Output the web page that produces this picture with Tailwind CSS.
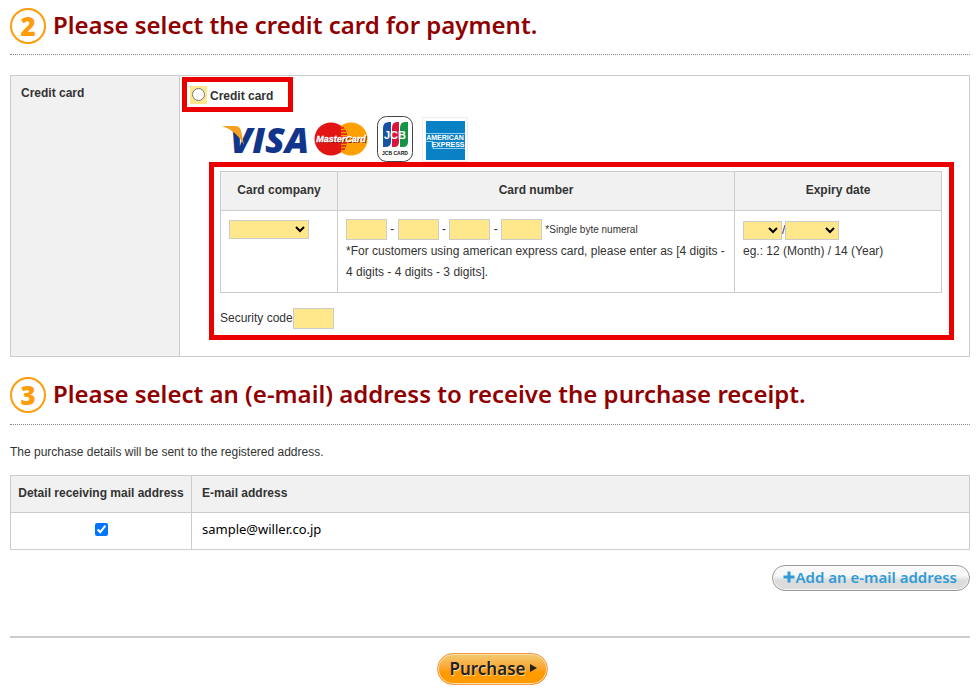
<!DOCTYPE html>
<html lang="en">
<head>
    <meta charset="UTF-8">
    <meta name="viewport" content="width=device-width, initial-scale=1.0">
    <title>Payment</title>
    <script src="https://cdn.jsdelivr.net/npm/@tailwindcss/browser@4"></script>
</head>
<body class="bg-white font-['Liberation_Sans',Arial,sans-serif] text-[12px] leading-[21px] text-[#333]">
    <form class="px-[10px] pt-2">
        <!-- credit card -->
        <h2 class="flex items-center gap-[7px] pb-[10px] border-b border-dotted border-[#888] font-['Noto_Sans',sans-serif] text-[24px] leading-8 font-semibold text-[#900000]">
            <span class="flex items-center justify-center size-9 shrink-0 rounded-full border-2 border-[#ff9c0c] text-[26px] font-black text-[#ff9c0c]">2</span>
            <span class="pb-0.5">Please select the credit card for payment.</span>
        </h2>

        <div class="mt-5 flex border border-[#ccc]">
            <div class="w-[169px] shrink-0 px-[10px] py-[7px] bg-[#f1f1f1] border-r border-[#ccc] font-bold">Credit card</div>
            <div class="grow pl-[2px] pr-[15px] pt-px pb-4">
                <label class="flex w-[111px] h-[35px] items-center gap-[3px] border-5 border-[#eb0000] pl-[3px] font-bold">
                    <span class="flex items-center justify-center w-[17px] h-[18px] bg-[#ffe88c]">
                        <input type="radio" name="payment" class="size-[13px]">
                    </span>
                    <span class="pt-[3px]">Credit card</span>
                </label>

                <div class="ml-[39px] mt-1 flex items-center h-[46px]">
                    <svg class="w-[90px] h-[46px]" viewBox="0 0 90 46" role="img" aria-label="VISA">
                        <text x="9" y="37" font-family="Open Sans, sans-serif" font-size="36" font-weight="800" font-style="italic" fill="#10358a">VISA</text>
                        <path d="M1 10H14Q19 10 20 15L23 29Q16 15 1 10Z" fill="#f5a01e"/>
                    </svg>
                    <svg class="ml-[3px] w-[54px] h-[46px]" viewBox="0 0 54 46" role="img" aria-label="MasterCard">
                        <circle cx="37" cy="23" r="16.500" fill="#ff9f00"/>
                        <circle cx="17" cy="23" r="16.500" fill="#e31414"/>
                        <path d="M27 10a16.500 16.500 0 0 1 0 26z" fill="#ff9f00"/>
                        <path d="M26 12h4M25 15h7M24 18h9M24 21h9M24 24h9M24 27h9M24 30h8M25 33h6" stroke="#e31414" stroke-width="1.500"/>
                        <text x="28" y="27" text-anchor="middle" font-family="Liberation Sans, sans-serif" font-size="9" font-weight="bold" font-style="italic" fill="#7a1408">MasterCard</text>
                        <text x="27" y="26" text-anchor="middle" font-family="Liberation Sans, sans-serif" font-size="9" font-weight="bold" font-style="italic" fill="#fff" stroke="#fff" stroke-width=".3">MasterCard</text>
                    </svg>
                    <svg class="ml-[9px] w-9 h-[46px]" viewBox="0 0 36 46" role="img" aria-label="JCB Cards">
                        <rect x=".5" y=".5" width="35" height="45" rx="9" fill="#fff" stroke="#444"/>
                        <path d="M6 12q0-6 6-6h2v20q0 5-6 5H6z" fill="#1852a5"/>
                        <path d="M15 12q0-6 5-6h2v20q0 5-5 5h-2z" fill="#d9163b"/>
                        <path d="M23 12q0-6 5-6h3v20q0 5-5 5h-3z" fill="#159447"/>
                        <text x="18" y="23" text-anchor="middle" font-family="Liberation Sans, sans-serif" font-size="11" font-weight="bold" fill="#fff">JCB</text>
                        <text x="18" y="39" text-anchor="middle" font-family="Liberation Sans, sans-serif" font-size="5" font-weight="bold" fill="#111">JCB CARD</text>
                    </svg>
                    <svg class="ml-[9px] w-[46px] h-[46px]" viewBox="0 0 46 46" role="img" aria-label="American Express">
                        <rect x=".5" y="1.500" width="45" height="44" fill="#fff" stroke="#eee"/>
                        <rect x="4" y="5" width="39" height="39" fill="#0b81c5"/>
                        <path d="M4 17.500H43M4 25.500H11V32.500H43" fill="none" stroke="#8fd0f2"/>
                        <text x="23" y="24" text-anchor="middle" font-family="Liberation Sans, sans-serif" font-size="7" font-weight="bold" fill="#fff">AMERICAN</text>
                        <text x="26" y="31" text-anchor="middle" font-family="Liberation Sans, sans-serif" font-size="7" font-weight="bold" fill="#fff">EXPRESS</text>
                    </svg>
                </div>

                <div class="ml-[27px] border-5 border-[#eb0000] pl-[6px] pr-[7px] pt-1 pb-[6px]">
                    <table class="w-full table-fixed border-collapse">
                        <thead>
                            <tr class="h-[39px] bg-[#f1f1f1]">
                                <th class="w-[117px] border border-[#ccc] pb-0.5">Card company</th>
                                <th class="border border-[#ccc] pb-0.5">Card number</th>
                                <th class="w-[207px] border border-[#ccc] pb-0.5">Expiry date</th>
                            </tr>
                        </thead>
                        <tbody>
                            <tr class="h-[82px] align-top">
                                <td class="border border-[#ccc] px-2 pt-2">
                                    <select aria-label="Card company" class="block mt-px w-20 h-[19px] border border-[#ccc] bg-[#ffe88c] text-black"><option></option></select>
                                </td>
                                <td class="border border-[#ccc] px-2 pt-2">
                                    <div class="h-[22px]">
                                        <input type="text" aria-label="Card number 1" class="align-middle w-[41px] h-[21px] border border-[#ccc] bg-[#ffe88c] px-1">
                                        -
                                        <input type="text" aria-label="Card number 2" class="align-middle w-[41px] h-[21px] border border-[#ccc] bg-[#ffe88c] px-1">
                                        -
                                        <input type="text" aria-label="Card number 3" class="align-middle w-[41px] h-[21px] border border-[#ccc] bg-[#ffe88c] px-1">
                                        -
                                        <input type="text" aria-label="Card number 4" class="align-middle w-[41px] h-[21px] border border-[#ccc] bg-[#ffe88c] px-1">
                                        <span class="text-[10px]">*Single byte numeral</span>
                                    </div>
                                    *For customers using american express card, please enter as [4 digits - 4 digits - 4 digits - 3 digits].
                                </td>
                                <td class="border border-[#ccc] px-2 pt-2">
                                    <div class="flex items-center h-[22px]">
                                        <select aria-label="Expiry month" class="w-[39px] h-[19px] border border-[#ccc] bg-[#ffe88c] text-black"><option></option></select>
                                        /
                                        <select aria-label="Expiry year" class="w-[54px] h-[19px] border border-[#ccc] bg-[#ffe88c] text-black"><option></option></select>
                                    </div>
                                    eg.: 12 (Month) / 14 (Year)
                                </td>
                            </tr>
                        </tbody>
                    </table>
                    <div class="mt-[15px] flex items-center">
                        <label for="security">Security code</label>
                        <input id="security" type="text" class="w-[41px] h-[21px] border border-[#ccc] bg-[#ffe88c] px-1">
                    </div>
                </div>
            </div>
        </div>

        <!-- receipt address -->
        <h2 class="mt-5 flex items-center gap-[7px] pb-[11px] border-b border-dotted border-[#888] font-['Noto_Sans',sans-serif] text-[24px] leading-8 font-semibold text-[#900000]">
            <span class="flex items-center justify-center size-9 shrink-0 rounded-full border-2 border-[#ff9c0c] text-[26px] font-black text-[#ff9c0c]">3</span>
            <span class="pb-0.5">Please select an (e-mail) address to receive the purchase receipt.</span>
        </h2>
        <p class="mt-[17px]">The purchase details will be sent to the registered address.</p>

        <table class="mt-3 w-full table-fixed border-collapse">
            <thead>
                <tr class="h-[37px] bg-[#f1f1f1]">
                    <th class="w-[181px] border border-[#ccc] pb-0.5">Detail receiving mail address</th>
                    <th class="border border-[#ccc] px-[10px] pb-0.5 text-left">E-mail address</th>
                </tr>
            </thead>
            <tbody>
                <tr class="h-[37px]">
                    <td class="border border-[#ccc] pb-1">
                        <input type="checkbox" checked aria-label="sample@willer.co.jp" class="block mx-auto size-[13px]">
                    </td>
                    <td class="border border-[#ccc] px-[10px] pb-1 font-['Noto_Sans',sans-serif] text-[13px] text-black">sample@willer.co.jp</td>
                </tr>
            </tbody>
        </table>

        <div class="mt-[15px] flex justify-end">
            <button type="button" class="flex items-center gap-px h-[26px] pl-[10px] pr-3 pb-0.5 rounded-full border border-[#999] bg-linear-to-b from-[#f8f8f8] from-40% to-[#dcdcdc] to-60% inset-ring inset-ring-white/70 font-['Noto_Sans',sans-serif] text-[15px] font-semibold text-[#2f9bd8]">
                <svg class="size-3" viewBox="0 0 12 12" fill="none" stroke="currentColor" stroke-width="3"><path d="M6 .5v11M.5 6h11"/></svg>
                Add an e-mail address
            </button>
        </div>

        <div class="mt-[45px] pt-[15px] pl-1 border-t-2 border-[#ccc] flex justify-center">
            <button type="submit" class="flex items-center gap-1 h-8 pl-3 pr-[10px] pb-0.5 rounded-full border border-[#f79646] bg-linear-to-b from-[#f0cb70] to-[#ff9a00] to-60% inset-ring inset-ring-[#ffe2a8] font-['Noto_Sans',sans-serif] text-[17px] font-semibold text-[#222] text-shadow-[1px_1px_0_#ffdc96]">
                Purchase
                <svg class="w-[7px] h-2" viewBox="0 0 7 8" fill="currentColor"><path d="M0 0l7 4-7 4z"/></svg>
            </button>
        </div>
    </form>
</body>
</html>
